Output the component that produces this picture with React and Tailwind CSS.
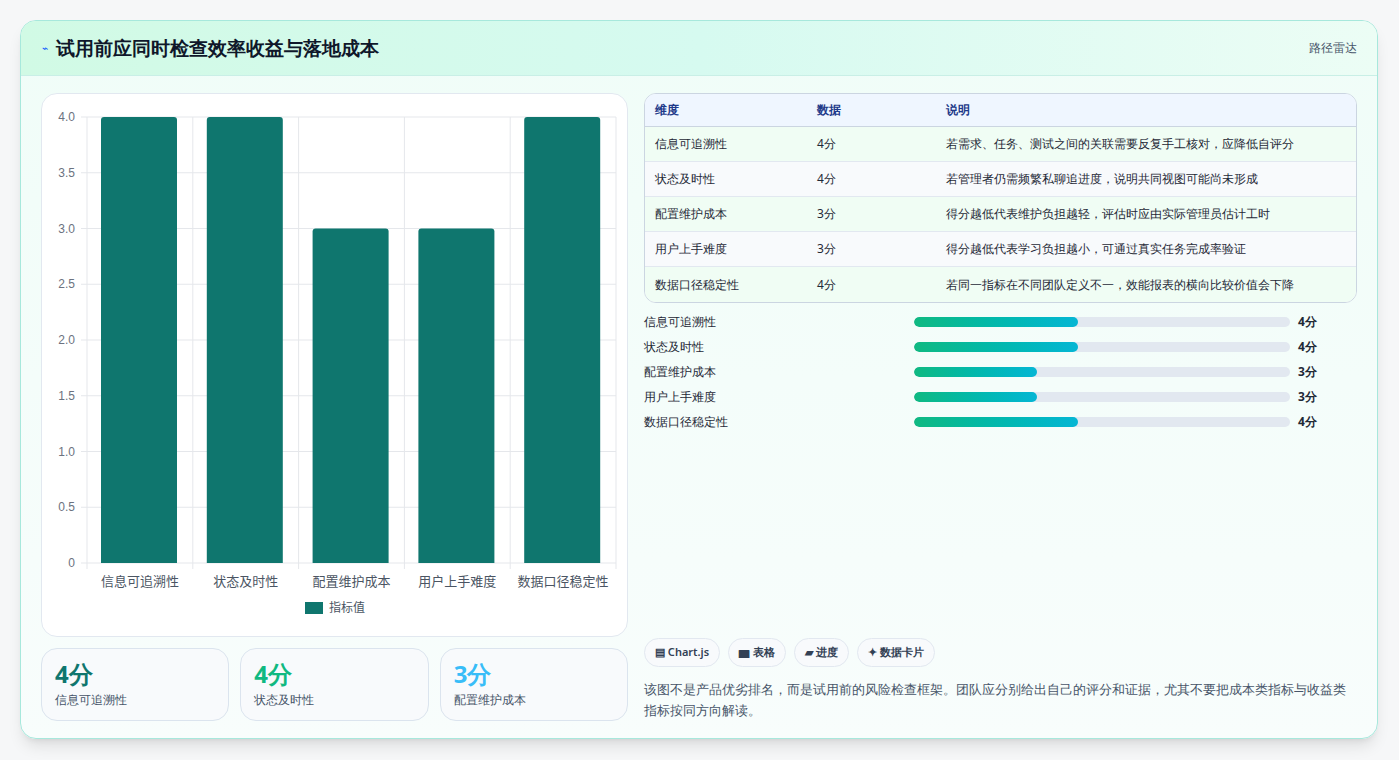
import React from "react";

const rows = [
  ["信息可追溯性", 4, "若需求、任务、测试之间的关联需要反复手工核对，应降低自评分"],
  ["状态及时性", 4, "若管理者仍需频繁私聊追进度，说明共同视图可能尚未形成"],
  ["配置维护成本", 3, "得分越低代表维护负担越轻，评估时应由实际管理员估计工时"],
  ["用户上手难度", 3, "得分越低代表学习负担越小，可通过真实任务完成率验证"],
  ["数据口径稳定性", 4, "若同一指标在不同团队定义不一，效能报表的横向比较价值会下降"],
];

function Chart() {
  const L = 45, R = 574, T = 23, B = 469;
  const ys = [0, 0.5, 1, 1.5, 2, 2.5, 3, 3.5, 4];
  const cw = (R - L) / 5;
  return (
    <svg width="585" height="540" className="block">
      {ys.map((v) => {
        const y = B - (v / 4) * (B - T);
        return (
          <g key={v}>
            <line x1={L - 6} x2={R} y1={y} y2={y} stroke="#e5e7eb" />
            <text x={L - 12} y={y + 4} textAnchor="end" fontSize="12" fill="#6b7280" fontFamily="Liberation Sans, sans-serif">{v === 0 ? "0" : v.toFixed(1)}</text>
          </g>
        );
      })}
      {[0, 1, 2, 3, 4, 5].map((i) => (
        <line key={i} x1={L + i * cw} x2={L + i * cw} y1={T} y2={B + 6} stroke="#e5e7eb" />
      ))}
      {rows.map(([n, v], i) => {
        const h = (v / 4) * (B - T);
        const x = L + i * cw + 14;
        return (
          <g key={n}>
            <path d={`M${x} ${B} V${B - h + 3} q0 -3 3 -3 H${x + 73} q3 0 3 3 V${B} Z`} fill="#0f766e" />
            <text x={L + i * cw + cw / 2} y={B + 23} textAnchor="middle" fontSize="13" fill="#4b5563" fontFamily="Noto Sans CJK SC, sans-serif">{n}</text>
          </g>
        );
      })}
      <rect x="263" y="508" width="18" height="12" fill="#0f766e" />
      <text x="287" y="518" fontSize="12" fill="#4b5563" fontFamily="Noto Sans CJK SC, sans-serif">指标值</text>
    </svg>
  );
}

export default function App() {
  return (
    <div className="min-h-[760px] bg-[#f6f7f8] pt-5 px-5 font-['Noto_Sans_CJK_SC',sans-serif]">
      <div className="w-[1358px] h-[719px] rounded-2xl border border-[#a7e8dc] bg-gradient-to-b from-[#f0fdf8] to-[#f8fdfc] overflow-hidden shadow-lg flex flex-col">
        <div className="h-[55px] shrink-0 bg-gradient-to-r from-[#d1fae5] via-[#d6faf0] to-[#ecfdf5] border-b border-[#c9efe6] flex items-center justify-between px-5">
          <div className="flex items-center gap-2">
            <span className="text-[11px] text-blue-600 italic">⌁</span>
            <span className="text-[19px] font-bold text-[#0f172a]">试用前应同时检查效率收益与落地成本</span>
          </div>
          <span className="text-[12px] text-[#475569] font-medium">路径雷达</span>
        </div>
        <div className="flex-1 flex gap-4 px-5 pt-[17px] pb-[18px]">
          <div className="w-[587px] flex flex-col gap-[11px]">
            <div className="h-[544px] rounded-2xl border border-[#e2e8f0] bg-white pt-[0px]">
              <Chart />
            </div>
            <div className="flex gap-[11px]">
              {[["4分", "信息可追溯性", "text-[#0f766e]"], ["4分", "状态及时性", "text-[#10b981]"], ["3分", "配置维护成本", "text-[#38bdf8]"]].map(([a, b, c]) => (
                <div key={b} className="flex-1 h-[73px] rounded-2xl border border-[#dbe4ee] bg-[#f8fafc] px-[13px] pt-[10px]">
                  <div className={`text-[24px] font-bold leading-[30px] ${c}`}>{a}</div>
                  <div className="text-[12px] text-[#475569] mt-[2px]">{b}</div>
                </div>
              ))}
            </div>
          </div>
          <div className="flex-1 flex flex-col">
            <div className="rounded-xl border border-[#cbd5e1] overflow-hidden bg-white">
              <div className="flex h-[33px] items-center bg-[#eff6ff] border-b border-[#cbd5e1] text-[12px] font-semibold text-[#1e3a8a]">
                <div className="w-[172px] pl-[10px]">维度</div>
                <div className="w-[129px]">数据</div>
                <div>说明</div>
              </div>
              {rows.map(([n, v, d], i) => (
                <div key={n} className={`flex h-[35px] items-center text-[12px] text-[#1f2937] ${i < 4 ? "border-b border-[#e2e8f0]" : ""} ${i % 2 === 0 ? "bg-[#f0fdf4]" : "bg-[#f8fafc]"}`}>
                  <div className="w-[172px] pl-[10px] font-medium">{n}</div>
                  <div className="w-[129px]">{v}分</div>
                  <div>{d}</div>
                </div>
              ))}
            </div>
            <div className="flex flex-col gap-[7px] mt-[10px]">
              {rows.map(([n, v]) => (
                <div key={n} className="flex items-center h-[18px] text-[12px] text-[#1f2937]">
                  <div className="w-[270px] font-medium">{n}</div>
                  <div className="w-[376px] h-[10px] rounded-full bg-[#e2e8f0] overflow-hidden">
                    <div className="h-full rounded-full bg-gradient-to-r from-[#10b981] to-[#06b6d4]" style={{ width: v === 4 ? "43.5%" : "32.6%" }} />
                  </div>
                  <div className="ml-2 font-bold">{v}分</div>
                </div>
              ))}
            </div>
            <div className="flex-1" />
            <div className="flex gap-2 text-[11px] font-semibold text-[#334155]">
              {["▤ Chart.js", "▆ 表格", "▰ 进度", "✦ 数据卡片"].map((t) => (
                <span key={t} className="h-[29px] px-[10px] flex items-center rounded-full border border-[#e2e8f0] bg-[#f8fafc]">{t}</span>
              ))}
            </div>
            <p className="mt-[12px] text-[13px] leading-[21px] text-[#475569] font-medium">该图不是产品优劣排名，而是试用前的风险检查框架。团队应分别给出自己的评分和证据，尤其不要把成本类指标与收益类指标按同方向解读。</p>
          </div>
        </div>
      </div>
    </div>
  );
}
